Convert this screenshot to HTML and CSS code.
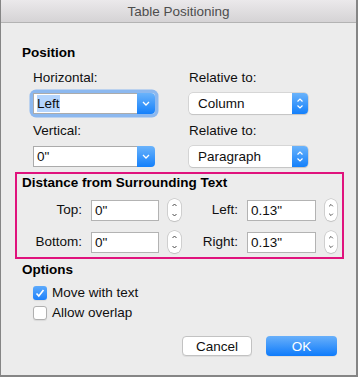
FILE: index.html
```html
<!DOCTYPE html>
<html>
<head>
    <title>Table Positioning</title>
    <meta name="viewport" content="width=device-width, initial-scale=1.0">
    <link rel="stylesheet" href="styles.css">
</head>
<body>
    <div class="window">
        <div class="titlebar">Table Positioning</div>
        <div class="content">
            <div class="section-title">Position</div>
            <div class="position-grid">
                <div class="field">
                    <label>Horizontal:</label>
                    <div class="combo focused">
                        <span class="combo-text"><span class="selected">Left</span></span>
                        <span class="combo-btn">
                            <svg width="8" height="5" viewBox="0 0 8 5"><path d="M1 1l3 3 3-3" fill="none" stroke="#fff" stroke-width="1.3"/></svg>
                        </span>
                    </div>
                </div>
                <div class="field">
                    <label>Relative to:</label>
                    <div class="popup">
                        <span class="popup-text">Column</span>
                        <span class="popup-btn">
                            <svg width="8" height="13" viewBox="0 0 8 13"><path d="M1.5 4.5l2.5-2.5 2.5 2.5M1.5 8.5l2.5 2.5 2.5-2.5" fill="none" stroke="#fff" stroke-width="1.2"/></svg>
                        </span>
                    </div>
                </div>
                <div class="field">
                    <label>Vertical:</label>
                    <div class="combo">
                        <span class="combo-text">0"</span>
                        <span class="combo-btn">
                            <svg width="8" height="5" viewBox="0 0 8 5"><path d="M1 1l3 3 3-3" fill="none" stroke="#fff" stroke-width="1.3"/></svg>
                        </span>
                    </div>
                </div>
                <div class="field">
                    <label>Relative to:</label>
                    <div class="popup">
                        <span class="popup-text">Paragraph</span>
                        <span class="popup-btn">
                            <svg width="8" height="13" viewBox="0 0 8 13"><path d="M1.5 4.5l2.5-2.5 2.5 2.5M1.5 8.5l2.5 2.5 2.5-2.5" fill="none" stroke="#fff" stroke-width="1.2"/></svg>
                        </span>
                    </div>
                </div>
            </div>

            <div class="highlight-box">
                <div class="box-title">Distance from Surrounding Text</div>
                <div class="distance-grid">
                    <span class="dist-label">Top:</span>
                    <span class="dist-input">0"</span>
                    <span class="stepper"><svg width="13" height="22" viewBox="0 0 13 22"><path d="M4.5 7l2-2 2 2M4.5 15l2 2 2-2" fill="none" stroke="#4a4a4a" stroke-width="1"/></svg></span>
                    <span class="dist-label">Left:</span>
                    <span class="dist-input">0.13"</span>
                    <span class="stepper"><svg width="13" height="22" viewBox="0 0 13 22"><path d="M4.5 7l2-2 2 2M4.5 15l2 2 2-2" fill="none" stroke="#4a4a4a" stroke-width="1"/></svg></span>

                    <span class="dist-label">Bottom:</span>
                    <span class="dist-input">0"</span>
                    <span class="stepper"><svg width="13" height="22" viewBox="0 0 13 22"><path d="M4.5 7l2-2 2 2M4.5 15l2 2 2-2" fill="none" stroke="#4a4a4a" stroke-width="1"/></svg></span>
                    <span class="dist-label">Right:</span>
                    <span class="dist-input">0.13"</span>
                    <span class="stepper"><svg width="13" height="22" viewBox="0 0 13 22"><path d="M4.5 7l2-2 2 2M4.5 15l2 2 2-2" fill="none" stroke="#4a4a4a" stroke-width="1"/></svg></span>
                </div>
            </div>

            <div class="section-title options-title">Options</div>
            <div class="checks">
                <div class="check-row">
                    <span class="checkbox checked">
                        <svg width="14" height="14" viewBox="0 0 14 14"><path d="M3.5 7.5l2.3 2.6 4.7-6.2" fill="none" stroke="#fff" stroke-width="1.6"/></svg>
                    </span>
                    <span>Move with text</span>
                </div>
                <div class="check-row">
                    <span class="checkbox"></span>
                    <span>Allow overlap</span>
                </div>
            </div>

            <div class="buttons">
                <button class="btn">Cancel</button>
                <button class="btn btn-primary">OK</button>
            </div>
        </div>
    </div>
</body>
</html>
```

FILE: styles.css
```css
body {
    margin: 0;
    font-family: "Liberation Sans", Arial, sans-serif;
    font-size: 13.5px;
    line-height: 16px;
    color: #0f0f0f;
}
.window {
    width: 358px;
    height: 377px;
    box-sizing: border-box;
    background-color: #ececec;
    border-left: 1px solid #858585;
    border-right: 2px solid #858585;
    border-bottom: 2px solid #858585;
}
.titlebar {
    height: 21px;
    padding-top: 1px;
    line-height: 22px;
    text-align: center;
    color: #4d4d4d;
    background: linear-gradient(#ebe9eb, #d5d3d5);
    border-bottom: 1px solid #b3b3b3;
}
.content {
    padding: 22px 19px 0 21px;
}
.section-title {
    font-weight: bold;
    color: #000000;
}
.position-grid {
    margin: 9px 0 0 11px;
    display: grid;
    grid-template-columns: 156px 119px;
    row-gap: 9px;
}
.field {
    display: flex;
    flex-direction: column;
    gap: 7px;
}
.combo {
    width: 122px;
    height: 21px;
    display: flex;
    box-sizing: border-box;
}
.combo.focused {
    border-radius: 3px;
    box-shadow: 0 0 0 3.5px #8cb8ef;
}
.combo-text {
    flex: 1;
    background-color: #ffffff;
    border: 1px solid #ababab;
    border-right: none;
    padding-left: 3px;
    line-height: 19px;
}
.selected {
    background-color: #b4d5fe;
    padding: 1px 0 1px 0;
}
.combo-btn,
.popup-btn {
    width: 18px;
    display: flex;
    align-items: center;
    justify-content: center;
    background: linear-gradient(#6ab3fb, #1480fb);
    border-radius: 0 4px 4px 0;
}
.popup {
    width: 119px;
    height: 21px;
    display: flex;
    border-radius: 4px;
    background-color: #ffffff;
    box-shadow: 0 0 0 0.5px #bfbfbf, 0 1px 1px rgba(0, 0, 0, 0.15);
}
.popup-text {
    flex: 1;
    padding-left: 9px;
    line-height: 21px;
}
.popup-btn {
    width: 16px;
}
.highlight-box {
    margin: 5px 0 0 -7px;
    width: 329px;
    box-sizing: border-box;
    border: 2px solid #e0137d;
    padding: 1px 0 4px 0;
}
.box-title {
    font-weight: bold;
    color: #000000;
    padding-left: 5px;
}
.distance-grid {
    margin-top: 8px;
    display: grid;
    grid-template-columns: 65px 68px 13px 48px 69px 12px;
    grid-auto-rows: 22px;
    column-gap: 9px;
    row-gap: 10px;
    align-items: center;
}
.dist-label {
    text-align: right;
}
.dist-input {
    height: 21px;
    box-sizing: border-box;
    background-color: #ffffff;
    border: 1px solid #b3b3b3;
    padding-left: 3px;
    line-height: 19px;
}
.stepper {
    height: 22px;
    display: flex;
}
.stepper svg {
    background-color: #ffffff;
    border-radius: 6px;
    box-shadow: 0 0 0 0.5px #b5b5b5, 0 1px 1px rgba(0, 0, 0, 0.12);
}
.options-title {
    margin-top: 3px;
}
.checks {
    margin: 7px 0 0 11px;
    display: flex;
    flex-direction: column;
    gap: 4px;
}
.check-row {
    display: flex;
    align-items: center;
    gap: 5px;
}
.checkbox {
    width: 14px;
    height: 14px;
    box-sizing: border-box;
    border-radius: 3px;
    background-color: #ffffff;
    border: 1px solid #b0b0b0;
    box-shadow: 0 1px 1px rgba(0, 0, 0, 0.08);
}
.checkbox.checked {
    border: none;
    background: linear-gradient(#5daafc, #1d80fa);
}
.checkbox svg {
    display: block;
}
.buttons {
    margin-top: 15px;
    display: flex;
    justify-content: flex-end;
    gap: 14px;
}
.btn {
    width: 70px;
    height: 20px;
    padding: 0;
    font-family: "Liberation Sans", Arial, sans-serif;
    font-size: 13.5px;
    color: #0f0f0f;
    background-color: #ffffff;
    border: 1px solid #c2c2c2;
    border-radius: 4px;
    box-shadow: 0 1px 0 rgba(0, 0, 0, 0.06);
}
.btn-primary {
    width: 71px;
    color: #ffffff;
    border: none;
    background: linear-gradient(#69b0fa, #0e7bfb);
}
```
